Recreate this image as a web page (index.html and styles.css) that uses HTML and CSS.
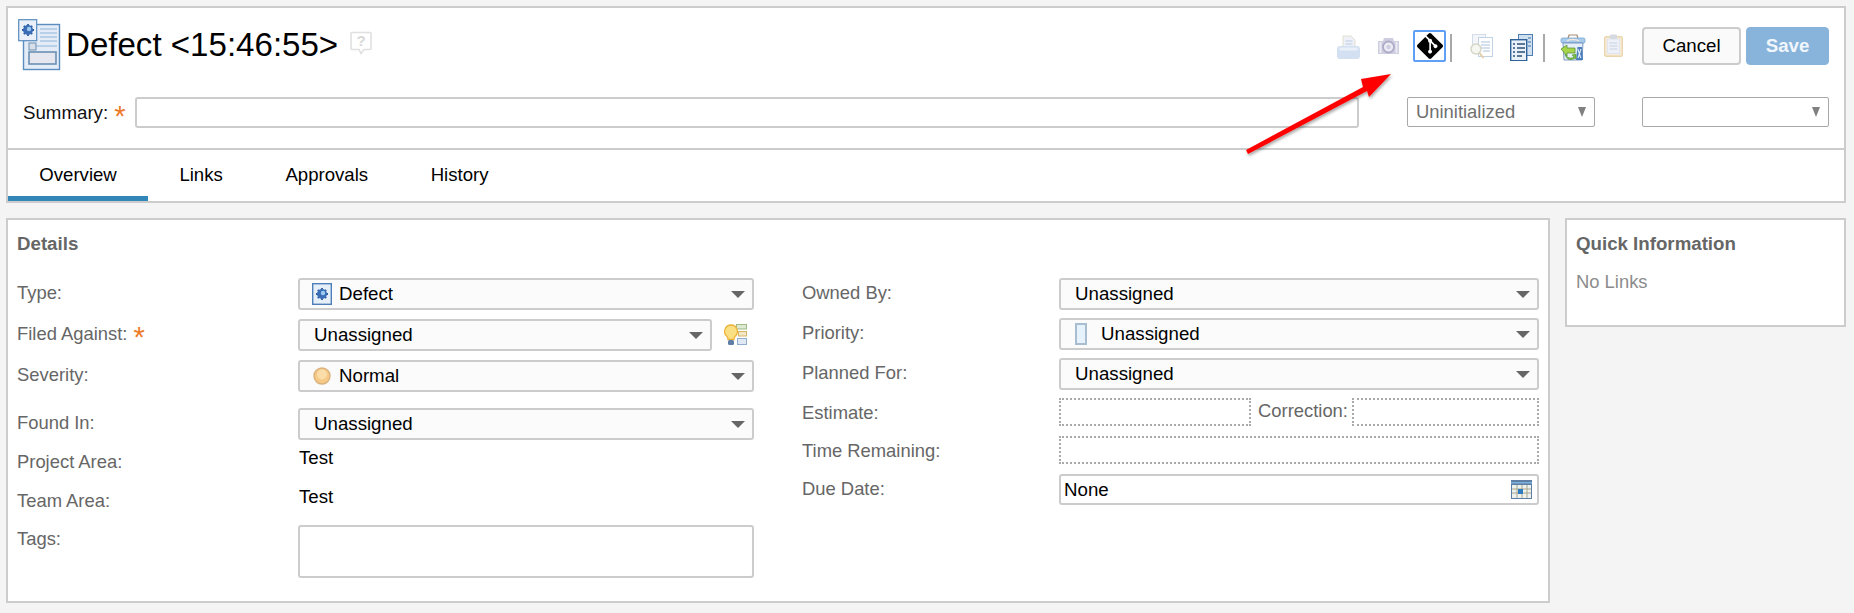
FILE: index.html
```html
<!DOCTYPE html>
<html lang="en">
<head>
<meta charset="utf-8">
<title>Defect</title>
<link rel="stylesheet" href="styles.css">
</head>
<body>
<div class="page">
  <header class="card head">
    <div class="title-row">
      <svg class="doc-icon soft" viewBox="0 0 43 52" width="43" height="52">
        <rect x="5.5" y="5.5" width="36" height="45" fill="#e4edf7" stroke="#5b8dbf" stroke-width="1.4"/>
        <path d="M22 10h17M22 14h17M22 18h17M22 22h17M12 27h27" stroke="#a9c6e4" stroke-width="1.6"/>
        <rect x="11" y="24" width="7" height="7" fill="#d8dfe8" stroke="#6c8fb3"/>
        <rect x="11" y="33" width="27" height="12" fill="#e6e6ee" stroke="#6c8fb3" stroke-width="1.6"/>
        <rect x="0.7" y="0.7" width="18" height="21" fill="#e9f0f9" stroke="#5b8dbf" stroke-width="1.2"/>
        <path d="M10 5v12M4 11h12M5.800 6.800l8.400 8.400M14.200 6.800l-8.400 8.400" stroke="#2f5c9e" stroke-width="1.800"/>
        <circle cx="10" cy="11" r="5" fill="#3a6db5"/>
        <circle cx="11" cy="10" r="2.200" fill="#9ccbf0"/>
      </svg>
      <h1 class="title">Defect &lt;15:46:55&gt;</h1>
      <svg class="help-icon" viewBox="0 0 22 24" width="22" height="24">
        <path d="M2 1.5h18a1 1 0 0 1 1 1v15a1 1 0 0 1-1 1h-6l-3 4-2-4H2a1 1 0 0 1-1-1v-15a1 1 0 0 1 1-1z" fill="#fff" stroke="#e0e0e0" stroke-width="1.6"/>
        <text x="11" y="15" class="help-q">?</text>
      </svg>
      <div class="toolbar">
        <svg class="tool soft tool-print" viewBox="0 0 23 24" width="23" height="24">
          <path d="M6 1h8l4 4v8H6z" fill="#eef2f8" stroke="#e0dfd0"/>
          <path d="M8.500 6h7M8.500 9h7" stroke="#bccbe0"/>
          <path d="M3 11h17a3 3 0 0 1 3 3v7a3 3 0 0 1-3 3H3a3 3 0 0 1-3-3v-7a3 3 0 0 1 3-3z" fill="#d3e0f1"/>
          <rect x="2.500" y="12.500" width="18" height="3" fill="#eaf0f8"/>
        </svg>
        <svg class="tool soft tool-camera" viewBox="0 0 23 18" width="23" height="18">
          <path d="M1 4h5l1-3h9l1 3h5v13H1z" fill="#cfcde0"/>
          <circle cx="11.500" cy="10" r="5.500" fill="#ecebf4" stroke="#aeacc8" stroke-width="1.800"/>
          <circle cx="11.500" cy="10" r="2.200" fill="#cfcde0"/>
          <rect x="2.500" y="5" width="2" height="11" fill="#ecebf4"/>
          <rect x="18.500" y="5" width="2" height="11" fill="#ecebf4"/>
        </svg>
        <button class="git-btn" type="button" aria-label="Git">
          <svg viewBox="0 0 24 24" width="26" height="26">
            <path fill="#000" d="M23.546 10.93L13.067.452c-.604-.603-1.582-.603-2.188 0L8.708 2.627l2.76 2.76c.645-.215 1.379-.07 1.889.441.516.515.658 1.258.438 1.9l2.658 2.66c.645-.223 1.387-.078 1.9.435.721.72.721 1.884 0 2.604-.719.719-1.881.719-2.6 0-.539-.541-.674-1.337-.404-1.996L12.86 8.955v6.525c.176.086.342.203.488.348.713.721.713 1.883 0 2.6-.719.721-1.889.721-2.609 0-.719-.719-.719-1.879 0-2.598.182-.18.387-.316.605-.406V8.835c-.217-.091-.424-.222-.6-.401-.545-.545-.676-1.342-.396-2.009L7.636 3.7.45 10.881c-.6.605-.6 1.584 0 2.189l10.48 10.477c.604.604 1.582.604 2.186 0l10.43-10.43c.605-.603.605-1.582 0-2.187"/>
          </svg>
        </button>
        <span class="sep sep-a"></span>
        <svg class="tool soft tool-search" viewBox="0 0 24 25" width="24" height="25">
          <rect x="3.500" y="0.500" width="13" height="15" fill="#f3f5f9" stroke="#d3dce8"/>
          <rect x="9.500" y="3.500" width="14" height="19" fill="#fff" stroke="#c3d3e6"/>
          <path d="M12 8h9M12 11h9M12 14h9M14 17h7" stroke="#c6d6e8" stroke-width="1.300"/>
          <circle cx="7" cy="15" r="5" fill="#f7f7f2" stroke="#d6d6c8" stroke-width="1.500"/>
          <path d="M10.500 19l4 5" stroke="#e1cfa8" stroke-width="2"/>
        </svg>
        <svg class="tool soft tool-form" viewBox="0 0 23 27" width="23" height="27">
          <rect x="8.500" y="0.500" width="14" height="21" fill="#cfe0f0" stroke="#4f7fb0"/>
          <rect x="0.700" y="5.700" width="16" height="21" fill="#eaf1f8" stroke="#2f629b" stroke-width="1.400"/>
          <path d="M3 10h2M7 10h8M3 14h2M7 14h8M3 18h2M7 18h8M3 22h2M7 22h5" stroke="#2c4f78" stroke-width="1.500"/>
          <path d="M18 4h3M18 8h3M18 12h3" stroke="#3f6f9f"/>
        </svg>
        <span class="sep sep-b"></span>
        <svg class="tool soft tool-restore" viewBox="0 0 26 27" width="26" height="27">
          <path d="M8 4.500l1-3.500h8l1 3.500" fill="none" stroke="#a58a70" stroke-width="1.200"/>
          <rect x="1" y="4" width="24" height="5" rx="1.500" fill="#a6cbec" stroke="#7ba6cf" stroke-width="0.800"/>
          <path d="M7 7c2-2 9-2 12 0" fill="none" stroke="#f4e6d8" stroke-width="1.500"/>
          <path d="M3 9h20l-1 17H4z" fill="#e6eff8" stroke="#5f82b4" stroke-width="0.800"/>
          <path d="M16 26l1.500-13h4.500l1 13z" fill="#4a7cbc"/>
          <path d="M17.800 15l3 9M21 15l-3 9" stroke="#dde9f6" stroke-width="1.200"/>
          <path d="M1 15l6-4v3h8v5H7v3z" fill="#a8d44a" stroke="#4a8a30" stroke-width="0.700"/>
          <path d="M5 20c2 4 6 5 9 3l-2-2 4-1v5l-1-1c-4 3-9 2-10-4z" fill="#78c040" stroke="#4a8a30" stroke-width="0.500"/>
        </svg>
        <svg class="tool soft tool-clip" viewBox="0 0 19 23" width="19" height="23">
          <rect x="0.700" y="2.700" width="17.600" height="19.600" rx="1.500" fill="#f8ecd8" stroke="#e9d5ae" stroke-width="1.400"/>
          <rect x="3.500" y="5" width="12" height="14.500" fill="#eef1f7" stroke="#dfe4ef"/>
          <rect x="6" y="0.500" width="7" height="4.500" rx="1" fill="#d5d9e2"/>
          <path d="M5.500 9h8M5.500 12h8M5.500 15h8" stroke="#c7d2e4"/>
        </svg>
        <button class="btn btn-cancel" type="button">Cancel</button>
        <button class="btn btn-save" type="button">Save</button>
      </div>
    </div>
    <div class="summary-row">
      <label class="summary-label">Summary:<span class="req">*</span></label>
      <div class="summary-input"></div>
      <div class="mini-select mini-state"><span>Uninitialized</span><i class="mini-caret"></i></div>
      <div class="mini-select mini-res"><span></span><i class="mini-caret"></i></div>
    </div>
    <nav class="tabs">
      <a class="tab tab-active">Overview</a>
      <a class="tab">Links</a>
      <a class="tab">Approvals</a>
      <a class="tab">History</a>
    </nav>
  </header>

  <main class="content">
    <section class="card details">
      <h2 class="section-title">Details</h2>
      <div class="columns">
        <div class="col">
          <div class="row h41"><span class="lbl">Type:</span>
            <div class="select select-icon"><svg class="opt-icon soft opt-type" viewBox="0 0 20 22" width="20" height="22"><rect x="0.700" y="0.700" width="18.600" height="20.600" fill="#e6eef8" stroke="#4f7fb8" stroke-width="1.400"/><path d="M10 5v12M4 11h12M5.800 6.800l8.400 8.400M14.200 6.800l-8.400 8.400" stroke="#2f5c9e" stroke-width="1.800"/><circle cx="10" cy="11" r="5" fill="#3a6db5"/><circle cx="11" cy="10" r="2.200" fill="#9ccbf0"/></svg><span>Defect</span><i class="caret"></i></div></div>
          <div class="row h41"><span class="lbl">Filed Against:<span class="req">*</span></span>
            <div class="field-with-icon"><div class="select"><span class="indent">Unassigned</span><i class="caret"></i></div>
              <svg class="bulb soft" viewBox="0 0 24 24" width="24" height="24">
                <rect x="12.500" y="1.500" width="10" height="4.500" fill="#dfe8d2" stroke="#9dbb88"/>
                <rect x="14.500" y="8.500" width="8" height="4.500" fill="#f3e8c6" stroke="#d4b566"/>
                <rect x="13.500" y="15.500" width="9" height="6" fill="#dfe8f3" stroke="#92aecf"/>
                <path d="M7 2a6.500 6.500 0 0 1 4 11.500c-1 1-1 2-1 3H4c0-1 0-2-1-3A6.500 6.500 0 0 1 7 2z" fill="#fbe083" stroke="#eeb33a" stroke-width="1.300"/>
                <rect x="4" y="17" width="6" height="5" rx="1.500" fill="#5f7ea8"/>
              </svg></div></div>
          <div class="row h48"><span class="lbl">Severity:</span>
            <div class="select"><svg class="opt-icon soft opt-sev" viewBox="0 0 18 18" width="18" height="18"><circle cx="9" cy="9" r="8" fill="#f6c987" stroke="#d9b27e" stroke-width="1.400"/><circle cx="9" cy="7.500" r="5" fill="#fbdda9"/></svg><span>Normal</span><i class="caret"></i></div></div>
          <div class="row h37"><span class="lbl">Found In:</span>
            <div class="select"><span class="indent">Unassigned</span><i class="caret"></i></div></div>
          <div class="row row-text h39"><span class="lbl lbl-low">Project Area:</span><span class="val">Test</span></div>
          <div class="row row-text h41"><span class="lbl lbl-low">Team Area:</span><span class="val">Test</span></div>
          <div class="row row-tags"><span class="lbl lbl-tags">Tags:</span><div class="tags"></div></div>
        </div>
        <div class="col">
          <div class="row h40"><span class="lbl">Owned By:</span>
            <div class="select"><span class="indent">Unassigned</span><i class="caret"></i></div></div>
          <div class="row h40"><span class="lbl">Priority:</span>
            <div class="select"><span class="prio"></span><span>Unassigned</span><i class="caret"></i></div></div>
          <div class="row h40"><span class="lbl">Planned For:</span>
            <div class="select"><span class="indent">Unassigned</span><i class="caret"></i></div></div>
          <div class="row h38"><span class="lbl">Estimate:</span>
            <div class="dual"><div class="dotted"></div><span class="lbl lbl-inline">Correction:</span><div class="dotted dotted-b"></div></div></div>
          <div class="row h38"><span class="lbl">Time Remaining:</span><div class="dotted"></div></div>
          <div class="row"><span class="lbl">Due Date:</span>
            <div class="date"><span>None</span>
              <svg class="soft" viewBox="0 0 21 19" width="21" height="19"><rect width="21" height="19" fill="#5f7ea6"/><rect y="2" width="21" height="1.500" fill="#7fb0dc"/><rect x="1" y="5" width="19" height="13" fill="#eef2ee"/><path d="M1 9h19M1 13h19M6 5v13M11 5v13M16 5v13" stroke="#a8a68e"/><rect x="7" y="9" width="5" height="5" fill="#2f7dc0"/></svg>
            </div></div>
        </div>
      </div>
    </section>
    <aside class="card quick">
      <h2 class="section-title">Quick Information</h2>
      <p class="none">No Links</p>
    </aside>
  </main>
</div>
<svg class="arrow" viewBox="0 0 160 90" width="160" height="90" aria-hidden="true">
  <defs><filter id="sh" x="-20%" y="-20%" width="140%" height="140%"><feDropShadow dx="1" dy="2" stdDeviation="1.500" flood-color="#000" flood-opacity="0.350"/></filter></defs>
  <path filter="url(#sh)" fill="#f00" d="M1 80L118 17 116 9 146 4 124 27 122 21 3 84z"/>
</svg>
</body>
</html>
```
FILE: styles.css
```css
* { box-sizing: border-box; }
html, body { margin: 0; height: 100%; }
body {
  background: #f4f4f4;
  font-family: "Liberation Sans", Arial, sans-serif;
  font-size: 18.4px;
  color: #000;
  overflow: hidden;
  position: relative;
}
.page { padding: 6px 8px 0 6px; }
.card { background: #fff; border: 2px solid #ccc; }
.soft { filter: blur(0.35px); }

/* header */
.head { height: 197px; display: flex; flex-direction: column; }
.title-row { height: 89px; flex: none; display: flex; align-items: flex-start; padding-left: 10px; }
.doc-icon { margin-top: 11px; flex: none; }
.title { margin: 16px 0 0 5px; font-size: 33.1px; font-weight: 400; line-height: 42px; white-space: nowrap; }
.help-icon { margin: 23px 0 0 12px; flex: none; }
.help-q { font: 700 15px "Liberation Sans", sans-serif; fill: #d8d8d8; text-anchor: middle; }
.toolbar { margin-left: auto; display: flex; align-items: flex-start; padding-right: 15px; }
.tool { flex: none; }
.tool-print { margin-top: 27px; }
.tool-camera { margin: 29px 0 0 17px; }
.git-btn {
  margin: 22px 0 0 13px; padding: 0; width: 33px; height: 32px; flex: none;
  display: flex; align-items: center; justify-content: center;
  background: #fff; border: 2px solid #5f9ff5; border-radius: 2px;
}
.sep { width: 2px; height: 28px; background: #a8a8a8; margin-top: 26px; flex: none; }
.sep-a { margin-left: 4px; }
.tool-search { margin: 26px 0 0 17px; }
.tool-form { margin: 26px 0 0 17px; }
.sep-b { margin-left: 10px; }
.tool-restore { margin: 26px 0 0 15px; }
.tool-clip { margin: 26px 0 0 18px; }
.btn {
  height: 38px; margin-top: 19px; font: inherit; font-size: 18.7px; border-radius: 4px; flex: none; padding: 0;
}
.btn-cancel { width: 99px; margin-left: 19px; background: #fafafa; border: 2px solid #ccc; color: #000; }
.btn-save { width: 83px; margin-left: 5px; background: #88b4dc; border: 1px solid #88b4dc; color: #f1f6fb; font-weight: 700; }

.summary-row { height: 51px; flex: none; display: flex; align-items: flex-start; padding-left: 15px; }
.summary-label { width: 112px; line-height: 31px; flex: none; color: #111; font-size: 18.7px; }
.req { color: #ee7b2a; margin-left: 6px; font-size: 29px; line-height: 0; vertical-align: -7px; font-family: "Liberation Sans", sans-serif; }
.summary-input { width: 1224px; height: 31px; border: 2px solid #ccc; border-radius: 3px; flex: none; }
.mini-select {
  height: 30px; border: 1px solid #a8a8a8; border-radius: 2px; flex: none;
  display: flex; align-items: center; justify-content: space-between;
  padding: 0 8px; color: #707070; background: #fff;
}
.mini-state { width: 188px; margin-left: 48px; }
.mini-res { width: 187px; margin-left: 47px; }
.mini-caret { width: 0; height: 0; border-left: 4.500px solid transparent; border-right: 4.500px solid transparent; border-top: 10px solid #808080; }

.tabs { height: 53px; flex: none; display: flex; border-top: 2px solid #ccc; font-size: 18.6px; }
.tab { padding: 0 31.300px; line-height: 50px; height: 51px; }
.tab-active { border-bottom: 5px solid #3387b8; }

/* content */
.content { display: flex; margin-top: 15px; gap: 15px; align-items: flex-start; }
.details { width: 1544px; height: 385px; padding: 0 9px; flex: none; }
.quick { flex: 1; height: 109px; padding: 0 9px; }
.section-title { margin: 13px 0 0; font-size: 18.700px; line-height: 22px; color: #666; font-weight: 700; }
.none { margin: 16px 0 0; color: #8c8c8c; line-height: 22px; }

.columns { display: flex; gap: 48px; margin-top: 23px; }
.col { width: 737px; flex: none; }
.row { display: grid; grid-template-columns: 281px 1fr; align-items: start; }
.col + .col .row { grid-template-columns: 257px 1fr; }
.h37 { height: 37px; }
.h38 { height: 38px; }
.h39 { height: 39px; }
.h40 { height: 40px; }
.h41 { height: 41px; }
.h48 { height: 48px; }
.lbl { color: #666; line-height: 30px; white-space: nowrap; }
.lbl-low { line-height: 34px; }
.lbl-tags { line-height: 28px; }
.val { line-height: 26px; font-size: 18.7px; padding-left: 1px; }
.select {
  height: 32px; border: 2px solid #ccc; border-radius: 3px; background: #fbfbfb; font-size: 18.7px;
  display: flex; align-items: center; padding-left: 14px; flex: 1;
}
.caret {
  margin-left: auto; margin-right: 7px; width: 0; height: 0;
  border-left: 7px solid transparent; border-right: 7px solid transparent; border-top: 7px solid #666;
}
.opt-icon { flex: none; }
.opt-type { margin: 0 7px 0 -2px; }
.opt-sev { margin: 0 8px 0 -1px; }
.prio { width: 12px; height: 22px; background: #e6f3fc; border: 2px solid #a9bdd0; margin-right: 14px; flex: none; }
.field-with-icon { display: flex; align-items: flex-start; gap: 12px; }
.bulb { margin-top: 4px; margin-right: 6px; flex: none; }
.row-tags { height: 53px; }
.tags { height: 53px; border: 2px solid #ccc; border-radius: 3px; background: #fff; }
.dotted { height: 28px; border: 2px dotted #aaa; }
.dual { display: grid; grid-template-columns: 192px 1fr 187px; align-items: start; }
.lbl-inline { padding-left: 7px; line-height: 26px; }
.date {
  height: 31px; border: 2px solid #ccc; border-radius: 3px; background: #fff; font-size: 18.7px;
  display: flex; align-items: center; justify-content: space-between; padding: 0 5px 0 3px;
}

/* annotation over the page */
.arrow { position: absolute; left: 1245px; top: 70px; pointer-events: none; }
```
